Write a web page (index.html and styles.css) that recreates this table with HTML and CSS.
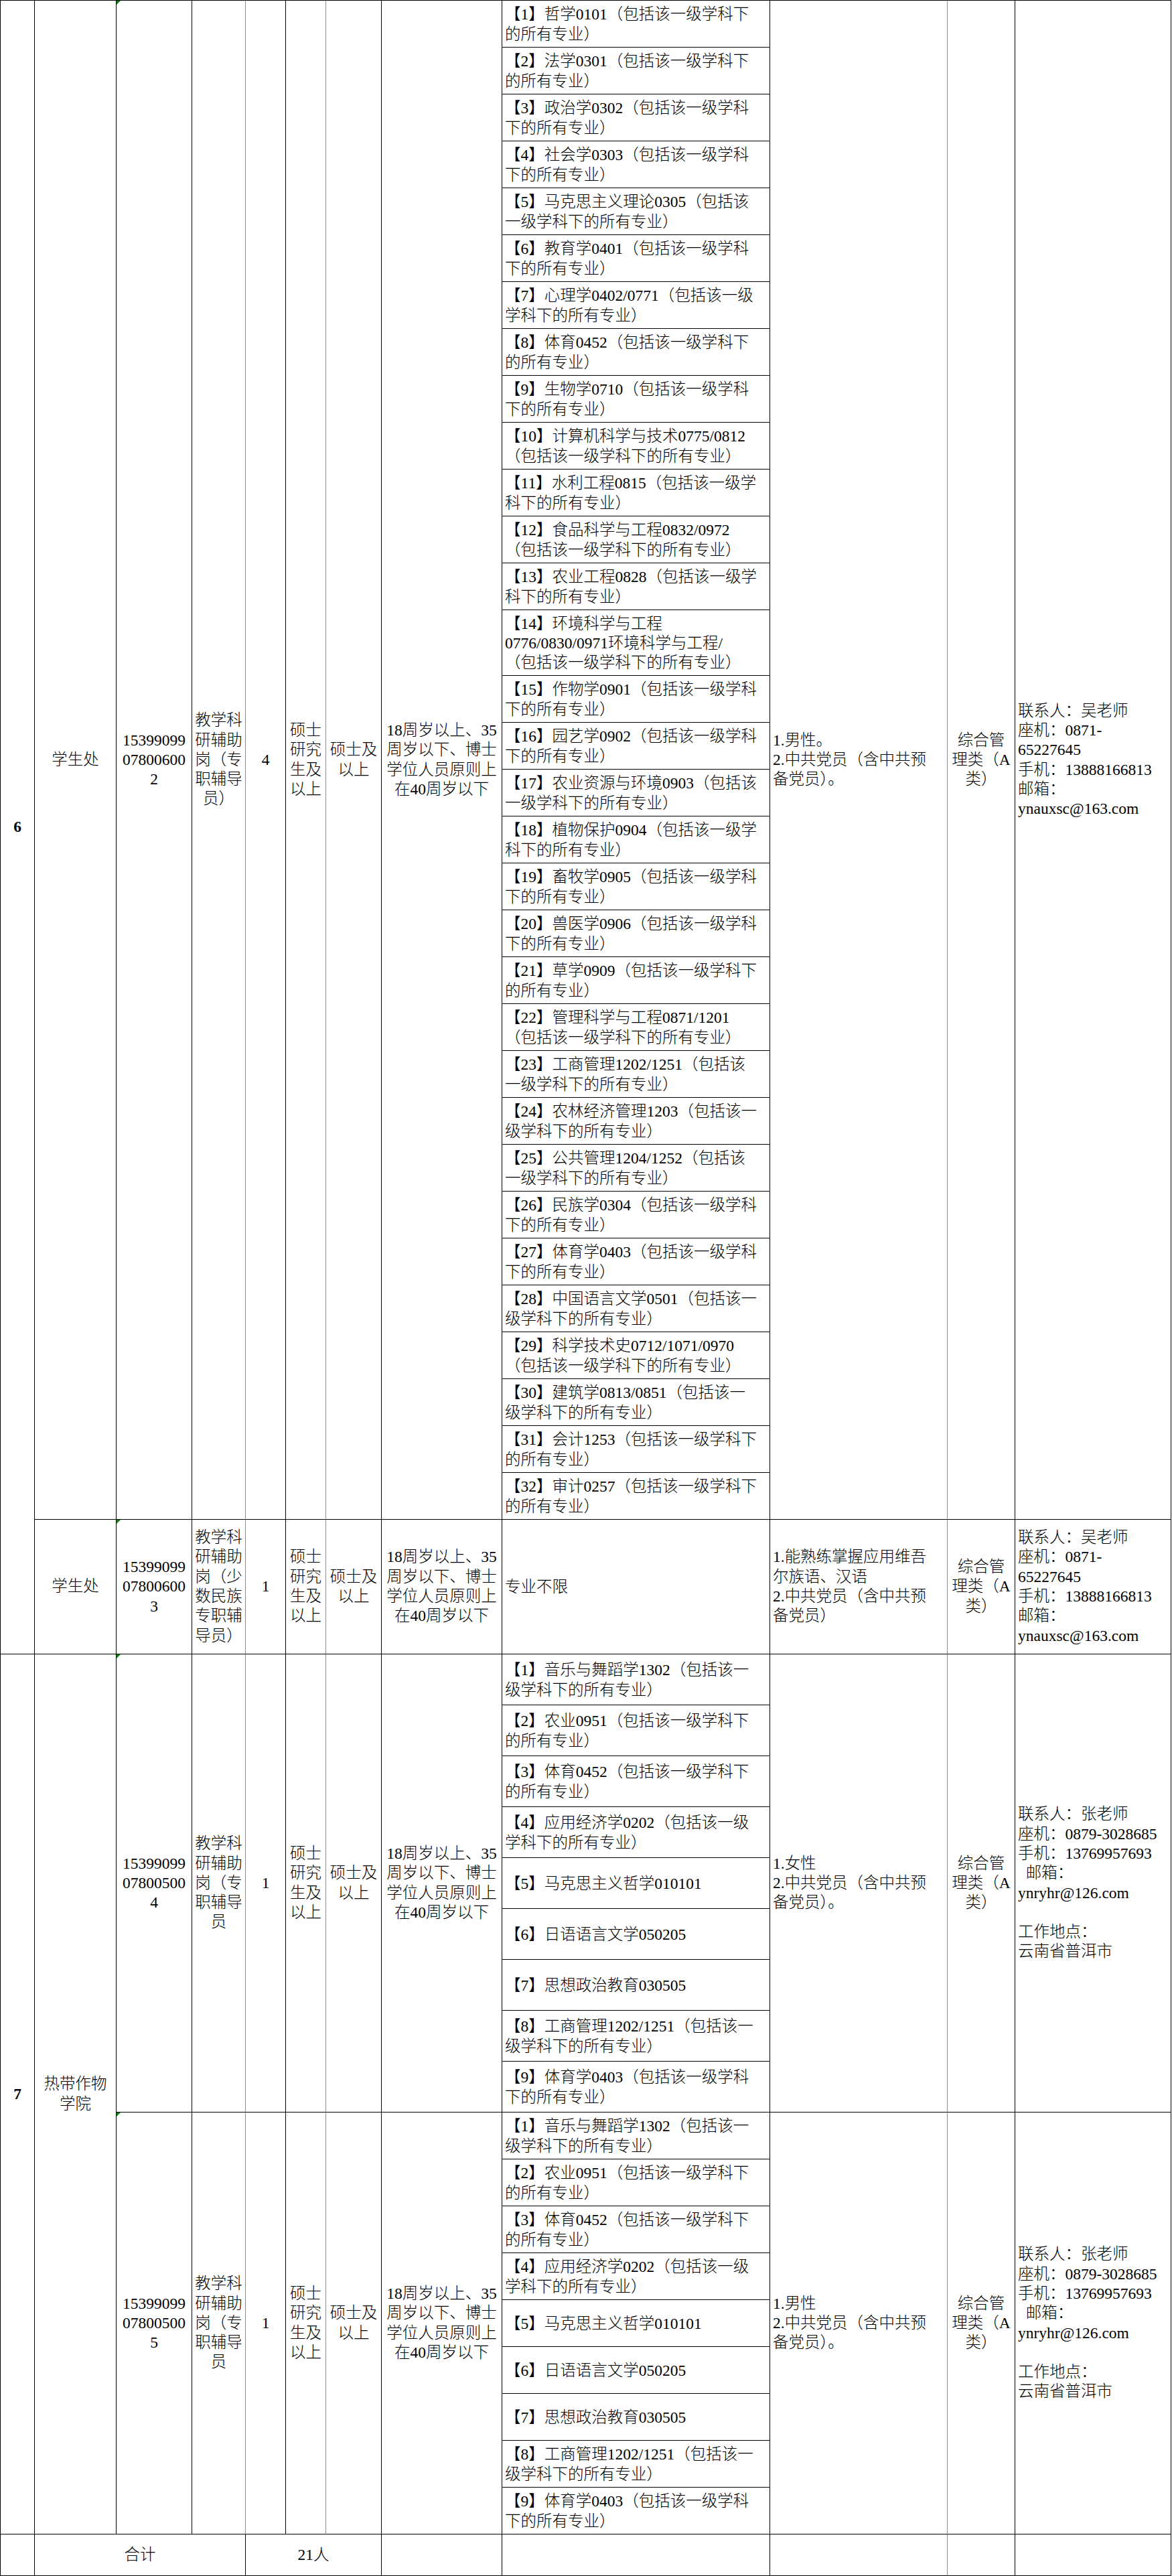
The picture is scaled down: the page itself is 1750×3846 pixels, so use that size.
FILE: index.html
```html
<!DOCTYPE html>
<html lang="zh-CN">
<head>
<meta charset="utf-8">
<title>岗位表</title>
<link rel="stylesheet" href="styles.css">
</head>
<body>
<div class="sheet">

  <!-- Section 6 -->
  <div class="section">
    <div class="cell w-no idx">6</div>
    <div class="stack">
      <div class="job">
        <div class="cell w-unit">学生处</div>
        <div class="cell w-code tri">15399099<br>07800600<br>2</div>
        <div class="cell w-name thin">教学科<br>研辅助<br>岗（专<br>职辅导<br>员）</div>
        <div class="cell w-num">4</div>
        <div class="cell w-edu thin">硕士<br>研究<br>生及<br>以上</div>
        <div class="cell w-deg">硕士及<br>以上</div>
        <div class="cell w-age">18周岁以上、35<br>周岁以下、博士<br>学位人员原则上<br>在40周岁以下</div>
        <div class="majors">
          <div class="m">【1】哲学0101（包括该一级学科下<br>的所有专业）</div>
          <div class="m">【2】法学0301（包括该一级学科下<br>的所有专业）</div>
          <div class="m">【3】政治学0302（包括该一级学科<br>下的所有专业）</div>
          <div class="m">【4】社会学0303（包括该一级学科<br>下的所有专业）</div>
          <div class="m">【5】马克思主义理论0305（包括该<br>一级学科下的所有专业）</div>
          <div class="m">【6】教育学0401（包括该一级学科<br>下的所有专业）</div>
          <div class="m">【7】心理学0402/0771（包括该一级<br>学科下的所有专业）</div>
          <div class="m">【8】体育0452（包括该一级学科下<br>的所有专业）</div>
          <div class="m">【9】生物学0710（包括该一级学科<br>下的所有专业）</div>
          <div class="m">【10】计算机科学与技术0775/0812<br>（包括该一级学科下的所有专业）</div>
          <div class="m">【11】水利工程0815（包括该一级学<br>科下的所有专业）</div>
          <div class="m">【12】食品科学与工程0832/0972<br>（包括该一级学科下的所有专业）</div>
          <div class="m">【13】农业工程0828（包括该一级学<br>科下的所有专业）</div>
          <div class="m m-tall">【14】环境科学与工程<br>0776/0830/0971环境科学与工程/<br>（包括该一级学科下的所有专业）</div>
          <div class="m">【15】作物学0901（包括该一级学科<br>下的所有专业）</div>
          <div class="m">【16】园艺学0902（包括该一级学科<br>下的所有专业）</div>
          <div class="m">【17】农业资源与环境0903（包括该<br>一级学科下的所有专业）</div>
          <div class="m">【18】植物保护0904（包括该一级学<br>科下的所有专业）</div>
          <div class="m">【19】畜牧学0905（包括该一级学科<br>下的所有专业）</div>
          <div class="m">【20】兽医学0906（包括该一级学科<br>下的所有专业）</div>
          <div class="m">【21】草学0909（包括该一级学科下<br>的所有专业）</div>
          <div class="m">【22】管理科学与工程0871/1201<br>（包括该一级学科下的所有专业）</div>
          <div class="m">【23】工商管理1202/1251（包括该<br>一级学科下的所有专业）</div>
          <div class="m">【24】农林经济管理1203（包括该一<br>级学科下的所有专业）</div>
          <div class="m">【25】公共管理1204/1252（包括该<br>一级学科下的所有专业）</div>
          <div class="m">【26】民族学0304（包括该一级学科<br>下的所有专业）</div>
          <div class="m">【27】体育学0403（包括该一级学科<br>下的所有专业）</div>
          <div class="m">【28】中国语言文学0501（包括该一<br>级学科下的所有专业）</div>
          <div class="m">【29】科学技术史0712/1071/0970<br>（包括该一级学科下的所有专业）</div>
          <div class="m">【30】建筑学0813/0851（包括该一<br>级学科下的所有专业）</div>
          <div class="m">【31】会计1253（包括该一级学科下<br>的所有专业）</div>
          <div class="m">【32】审计0257（包括该一级学科下<br>的所有专业）</div>
        </div>
        <div class="cell w-other thin left">1.男性。<br>2.中共党员（含中共预<br>备党员）。</div>
        <div class="cell w-exam">综合管<br>理类（A<br>类）</div>
        <div class="cell w-contact left">联系人：吴老师<br>座机：0871-<br>65227645<br>手机：13888166813<br>邮箱：<br>ynauxsc@163.com</div>
      </div>

      <div class="job">
        <div class="cell w-unit">学生处</div>
        <div class="cell w-code tri">15399099<br>07800600<br>3</div>
        <div class="cell w-name thin">教学科<br>研辅助<br>岗（少<br>数民族<br>专职辅<br>导员）</div>
        <div class="cell w-num">1</div>
        <div class="cell w-edu thin">硕士<br>研究<br>生及<br>以上</div>
        <div class="cell w-deg">硕士及<br>以上</div>
        <div class="cell w-age">18周岁以上、35<br>周岁以下、博士<br>学位人员原则上<br>在40周岁以下</div>
        <div class="majors">
          <div class="m m-single">专业不限</div>
        </div>
        <div class="cell w-other thin left">1.能熟练掌握应用维吾<br>尔族语、汉语<br>2.中共党员（含中共预<br>备党员）</div>
        <div class="cell w-exam">综合管<br>理类（A<br>类）</div>
        <div class="cell w-contact left">联系人：吴老师<br>座机：0871-<br>65227645<br>手机：13888166813<br>邮箱：<br>ynauxsc@163.com</div>
      </div>
    </div>
  </div>

  <!-- Section 7 -->
  <div class="section">
    <div class="cell w-no idx">7</div>
    <div class="cell w-unit">热带作物<br>学院</div>
    <div class="stack">
      <div class="job">
        <div class="cell w-code tri">15399099<br>07800500<br>4</div>
        <div class="cell w-name thin">教学科<br>研辅助<br>岗（专<br>职辅导<br>员</div>
        <div class="cell w-num">1</div>
        <div class="cell w-edu thin">硕士<br>研究<br>生及<br>以上</div>
        <div class="cell w-deg">硕士及<br>以上</div>
        <div class="cell w-age">18周岁以上、35<br>周岁以下、博士<br>学位人员原则上<br>在40周岁以下</div>
        <div class="majors">
          <div class="m m-76">【1】音乐与舞蹈学1302（包括该一<br>级学科下的所有专业）</div>
          <div class="m m-76">【2】农业0951（包括该一级学科下<br>的所有专业）</div>
          <div class="m m-76">【3】体育0452（包括该一级学科下<br>的所有专业）</div>
          <div class="m m-76">【4】应用经济学0202（包括该一级<br>学科下的所有专业）</div>
          <div class="m m-76">【5】马克思主义哲学010101</div>
          <div class="m m-76">【6】日语语言文学050205</div>
          <div class="m m-76">【7】思想政治教育030505</div>
          <div class="m m-76">【8】工商管理1202/1251（包括该一<br>级学科下的所有专业）</div>
          <div class="m m-76">【9】体育学0403（包括该一级学科<br>下的所有专业）</div>
        </div>
        <div class="cell w-other thin left">1.女性<br>2.中共党员（含中共预<br>备党员）。</div>
        <div class="cell w-exam">综合管<br>理类（A<br>类）</div>
        <div class="cell w-contact left">联系人：张老师<br>座机：0879-3028685<br>手机：13769957693<br>&nbsp;&nbsp;邮箱：<br>ynryhr@126.com<br><br>工作地点：<br>云南省普洱市</div>
      </div>

      <div class="job">
        <div class="cell w-code tri">15399099<br>07800500<br>5</div>
        <div class="cell w-name thin">教学科<br>研辅助<br>岗（专<br>职辅导<br>员</div>
        <div class="cell w-num">1</div>
        <div class="cell w-edu thin">硕士<br>研究<br>生及<br>以上</div>
        <div class="cell w-deg">硕士及<br>以上</div>
        <div class="cell w-age">18周岁以上、35<br>周岁以下、博士<br>学位人员原则上<br>在40周岁以下</div>
        <div class="majors">
          <div class="m">【1】音乐与舞蹈学1302（包括该一<br>级学科下的所有专业）</div>
          <div class="m">【2】农业0951（包括该一级学科下<br>的所有专业）</div>
          <div class="m">【3】体育0452（包括该一级学科下<br>的所有专业）</div>
          <div class="m">【4】应用经济学0202（包括该一级<br>学科下的所有专业）</div>
          <div class="m">【5】马克思主义哲学010101</div>
          <div class="m">【6】日语语言文学050205</div>
          <div class="m">【7】思想政治教育030505</div>
          <div class="m">【8】工商管理1202/1251（包括该一<br>级学科下的所有专业）</div>
          <div class="m">【9】体育学0403（包括该一级学科<br>下的所有专业）</div>
        </div>
        <div class="cell w-other thin left">1.男性<br>2.中共党员（含中共预<br>备党员）。</div>
        <div class="cell w-exam">综合管<br>理类（A<br>类）</div>
        <div class="cell w-contact left">联系人：张老师<br>座机：0879-3028685<br>手机：13769957693<br>&nbsp;&nbsp;邮箱：<br>ynryhr@126.com<br><br>工作地点：<br>云南省普洱市</div>
      </div>
    </div>
  </div>

  <!-- Total -->
  <div class="section foot">
    <div class="cell w-no"></div>
    <div class="cell w-total">合计</div>
    <div class="cell w-sum">21人</div>
    <div class="cell w-age"></div>
    <div class="cell w-major"></div>
    <div class="cell w-other thin"></div>
    <div class="cell w-exam"></div>
    <div class="cell w-contact"></div>
  </div>

</div>
</body>
</html>
```

FILE: styles.css
```css
html, body {
  margin: 0;
  padding: 0;
  background: #ffffff;
}

body {
  font-family: "Liberation Serif", "Noto Sans CJK SC", serif;
  font-size: 23.5px;
  font-weight: 300;
  line-height: 29.3px;
  color: #000000;
}

.sheet {
  display: flex;
  flex-direction: column;
  width: 1749px;
  border-top: 1px solid #000;
  border-left: 1px solid #000;
  box-sizing: border-box;
}

.section {
  display: flex;
  align-items: stretch;
}

.stack {
  display: flex;
  flex-direction: column;
}

.job {
  display: flex;
  align-items: stretch;
}

.cell {
  box-sizing: border-box;
  flex: none;
  display: flex;
  align-items: center;
  justify-content: center;
  text-align: center;
  white-space: nowrap;
  padding: 0 2px;
  border-right: 1px solid #000;
  border-bottom: 1px solid #000;
}

.cell.left {
  justify-content: flex-start;
  text-align: left;
  padding: 0 3px 0 4px;
}

.cell.thin {
  border-right-color: #8c8c8c;
}

.idx {
  font-weight: bold;
}

.w-no { width: 51px; }
.w-unit { width: 122px; }
.w-code { width: 113px; }
.w-name { width: 80px; }
.w-num { width: 60px; }
.w-edu { width: 60px; }
.w-deg { width: 83px; }
.w-age { width: 180px; }
.w-major { width: 400px; }
.w-other { width: 265px; }
.w-exam { width: 101px; }
.w-contact { width: 233px; }
.w-total { width: 315px; }
.w-sum { width: 203px; }

.tri {
  position: relative;
}

.tri::before {
  content: "";
  position: absolute;
  top: 0;
  left: 0;
  width: 0;
  height: 0;
  border-top: 6px solid #0a7d0a;
  border-right: 6px solid transparent;
}

.majors {
  display: flex;
  flex-direction: column;
  width: 400px;
  flex: none;
}

.m {
  box-sizing: border-box;
  height: 70px;
  display: flex;
  align-items: center;
  white-space: nowrap;
  padding: 2px 3px 0 4px;
  border-right: 1px solid #000;
  border-bottom: 1px solid #000;
}

.m-tall { height: 98px; }
.m-76 { height: 76px; }
.m-single { height: 201px; }

.foot {
  height: 62px;
}
```
